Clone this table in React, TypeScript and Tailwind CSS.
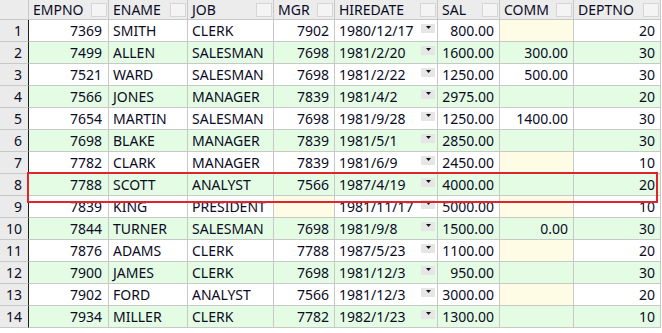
import React from 'react';

type Row = {
  empno: number;
  ename: string;
  job: string;
  mgr: number | null;
  hiredate: string;
  sal: string;
  comm: string | null;
  deptno: number;
};

const rows: Row[] = [
  { empno: 7369, ename: 'SMITH', job: 'CLERK', mgr: 7902, hiredate: '1980/12/17', sal: '800.00', comm: null, deptno: 20 },
  { empno: 7499, ename: 'ALLEN', job: 'SALESMAN', mgr: 7698, hiredate: '1981/2/20', sal: '1600.00', comm: '300.00', deptno: 30 },
  { empno: 7521, ename: 'WARD', job: 'SALESMAN', mgr: 7698, hiredate: '1981/2/22', sal: '1250.00', comm: '500.00', deptno: 30 },
  { empno: 7566, ename: 'JONES', job: 'MANAGER', mgr: 7839, hiredate: '1981/4/2', sal: '2975.00', comm: null, deptno: 20 },
  { empno: 7654, ename: 'MARTIN', job: 'SALESMAN', mgr: 7698, hiredate: '1981/9/28', sal: '1250.00', comm: '1400.00', deptno: 30 },
  { empno: 7698, ename: 'BLAKE', job: 'MANAGER', mgr: 7839, hiredate: '1981/5/1', sal: '2850.00', comm: null, deptno: 30 },
  { empno: 7782, ename: 'CLARK', job: 'MANAGER', mgr: 7839, hiredate: '1981/6/9', sal: '2450.00', comm: null, deptno: 10 },
  { empno: 7788, ename: 'SCOTT', job: 'ANALYST', mgr: 7566, hiredate: '1987/4/19', sal: '4000.00', comm: null, deptno: 20 },
  { empno: 7839, ename: 'KING', job: 'PRESIDENT', mgr: null, hiredate: '1981/11/17', sal: '5000.00', comm: null, deptno: 10 },
  { empno: 7844, ename: 'TURNER', job: 'SALESMAN', mgr: 7698, hiredate: '1981/9/8', sal: '1500.00', comm: '0.00', deptno: 30 },
  { empno: 7876, ename: 'ADAMS', job: 'CLERK', mgr: 7788, hiredate: '1987/5/23', sal: '1100.00', comm: null, deptno: 20 },
  { empno: 7900, ename: 'JAMES', job: 'CLERK', mgr: 7698, hiredate: '1981/12/3', sal: '950.00', comm: null, deptno: 30 },
  { empno: 7902, ename: 'FORD', job: 'ANALYST', mgr: 7566, hiredate: '1981/12/3', sal: '3000.00', comm: null, deptno: 20 },
  { empno: 7934, ename: 'MILLER', job: 'CLERK', mgr: 7782, hiredate: '1982/1/23', sal: '1300.00', comm: null, deptno: 10 },
];

const headers = ['EMPNO', 'ENAME', 'JOB', 'MGR', 'HIREDATE', 'SAL', 'COMM', 'DEPTNO'];

const grid = 'grid grid-cols-[29px_80px_79px_86px_61px_103px_62px_74px_87px]';
const cell = 'border-b border-b-[#c8c8c8] h-[22px] leading-[21px] whitespace-nowrap overflow-hidden';

function HeaderCell({ label }: { label: string }) {
  return (
    <div className="flex items-center justify-between h-[20px] bg-[#ececec] border-r border-b border-[#c8c8c8] pl-[4px] pr-[1px]">
      <span className="leading-[20px]">{label}</span>
      <span className="w-[16px] h-[14px] bg-[#f4f4f4] border border-[#d6d6d6]" />
    </div>
  );
}

function DropButton() {
  return (
    <span className="mt-[4px] w-[14px] h-[9px] bg-[#e6e6e6] flex justify-center pt-[2px]">
      <svg width="5" height="3" viewBox="0 0 5 3">
        <path d="M0 0h5L2.5 3z" fill="#111" />
      </svg>
    </span>
  );
}

export default function App() {
  return (
    <div
      className="relative w-[662px] h-[333px] overflow-hidden bg-white text-[14px] text-[#0b0b26]"
      style={{ fontFamily: '"Noto Sans", "Liberation Sans", sans-serif' }}
    >
      <div className={grid}>
        <div className="h-[20px] bg-[#ececec] border-r border-b border-[#c8c8c8]" />
        {headers.map((h) => (
          <HeaderCell key={h} label={h} />
        ))}
      </div>

      {rows.map((r, i) => {
        const green = i % 2 === 1;
        const bg = green ? 'bg-[#e4fce4]' : 'bg-white';
        const nul = green ? 'bg-[#e4fce4]' : 'bg-[#fffce6]';
        const dc = `${cell} border-r border-r-[#c8c8c8]`;
        return (
          <div key={r.empno} className={grid}>
            <div className={`${cell} border-r border-r-[#1e1e1e] bg-[#ebebeb] text-right pr-[6px]`}>{i + 1}</div>
            <div className={`${dc} ${bg} text-right pr-[6px]`}>{r.empno}</div>
            <div className={`${dc} ${bg} pl-[4px]`}>{r.ename}</div>
            <div className={`${dc} ${bg} pl-[4px]`}>{r.job}</div>
            <div className={`${dc} ${r.mgr === null ? nul : bg} text-right pr-[5px]`}>{r.mgr ?? ''}</div>
            <div className={`${dc} ${bg} flex justify-between items-start pl-[4px] pr-[2px]`}>
              <span>{r.hiredate}</span>
              <DropButton />
            </div>
            <div className={`${dc} ${bg} text-right pr-[5px]`}>{r.sal}</div>
            <div className={`${dc} ${r.comm === null ? nul : bg} text-right pr-[5px]`}>{r.comm ?? ''}</div>
            <div className={`${dc} ${bg} text-right pr-[5px]`}>{r.deptno}</div>
          </div>
        );
      })}

      <div className="absolute left-[27px] top-[172px] w-[631px] h-[31px] border-2 border-[#e0242c] pointer-events-none" />
    </div>
  );
}
